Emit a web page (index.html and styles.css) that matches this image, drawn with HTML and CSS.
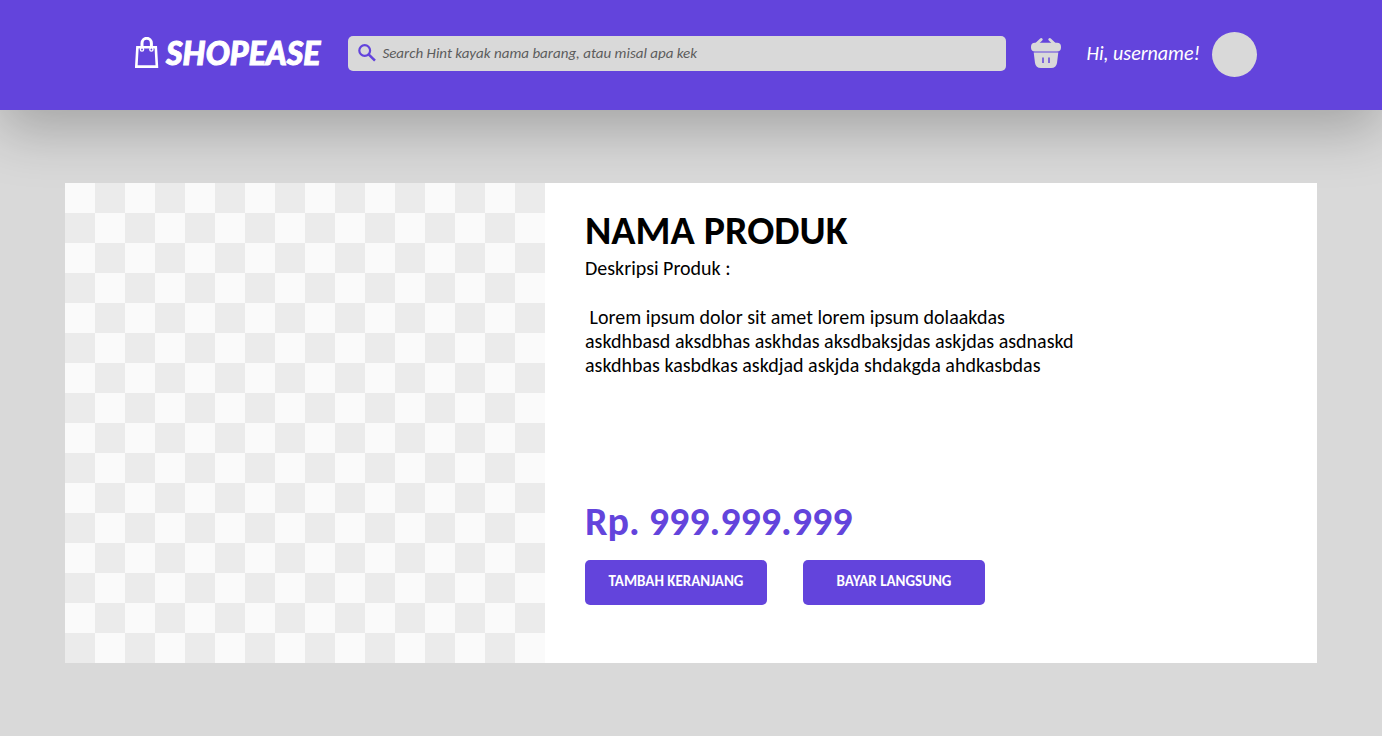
FILE: index.html
```html
<!DOCTYPE html>
<html lang="id">
<head>
<meta charset="utf-8">
<meta name="viewport" content="width=device-width, initial-scale=1">
<title>ShopEase</title>
<link rel="stylesheet" href="styles.css">
</head>
<body>
<header class="header">
  <a class="brand" href="#">
    <svg class="brand-icon" viewBox="0 0 24 32" width="24" height="32" fill="none" stroke="#fff" aria-hidden="true">
      <path d="M2.4 10.2H20.8L21.9 29.6H1.3Z" stroke-width="2.6"/>
      <path d="M7 12.5V6.2a4.7 4.900 0 0 1 9.400 0V12.500" stroke-width="3"/>
      <circle cx="7" cy="12.5" r="1.6" fill="#6344dc" stroke-width="1.4"/>
      <circle cx="16.4" cy="12.5" r="1.6" fill="#6344dc" stroke-width="1.4"/>
    </svg>
    <span class="brand-name">SHOPEASE</span>
  </a>
  <form class="search" role="search">
    <svg viewBox="0 0 18 18" width="18" height="18" fill="none" stroke="#6344dc" stroke-width="2.2" aria-hidden="true">
      <circle cx="6.7" cy="6.5" r="5.4"/>
      <path d="M10.6 10.4L17 16.6" stroke-width="2.6"/>
    </svg>
    <input class="search-input" type="search" aria-label="Cari barang" placeholder="Search Hint kayak nama barang, atau misal apa kek">
  </form>
  <a class="cart" href="#" aria-label="Keranjang">
    <svg viewBox="0 0 32 32" width="32" height="32" fill="#d9d9d9" aria-hidden="true">
      <path d="M6.500 7L11.200 2.500M24.500 7L19.800 2.500" stroke="#d9d9d9" stroke-width="3" stroke-linecap="round"/>
      <path d="M5 5.8h22a4 4 0 0 1 4 4v.7a4 4 0 0 1-4 4H5a4 4 0 0 1-4-4V9.800a4 4 0 0 1 4-4Z"/>
      <path d="M3.700 15.600H28.300L27 26a6 6 0 0 1-6 5H11a6 6 0 0 1-6-5Z"/>
      <path d="M13 20.500v5.500M19 20.500v5.500" stroke="#6344dc" stroke-width="1.500"/>
    </svg>
  </a>
  <a class="account" href="#">
    <span class="greeting">Hi, username!</span>
    <span class="avatar"></span>
  </a>
</header>
<main class="page">
  <article class="product">
    <div class="product-image" role="img" aria-label="Gambar produk"></div>
    <div class="product-info">
      <h1 class="title">NAMA PRODUK</h1>
      <p class="label">Deskripsi Produk :</p>
      <p class="description">&nbsp;Lorem ipsum dolor sit amet lorem ipsum dolaakdas<br>askdhbasd aksdbhas askhdas aksdbaksjdas askjdas asdnaskd<br>askdhbas kasbdkas askdjad askjda shdakgda ahdkasbdas</p>
      <p class="price">Rp. 999.999.999</p>
      <div class="actions">
        <button class="button" type="button">TAMBAH KERANJANG</button>
        <button class="button" type="button">BAYAR LANGSUNG</button>
      </div>
    </div>
  </article>
</main>
</body>
</html>
```
FILE: styles.css
```css
* {
  box-sizing: border-box;
}

body {
  margin: 0;
  background: #d9d9d9;
  color: #000;
  font-family: Carlito, Lato, sans-serif;
  font-size: 20px;
  line-height: 24px;
}

h1,
p {
  margin: 0;
}

a {
  color: inherit;
  text-decoration: none;
}

svg {
  display: block;
  flex: none;
}

.header {
  display: flex;
  align-items: center;
  padding: 32px 125px 33px 135px;
  background: #6344dc;
  color: #fff;
  box-shadow: 0 19px 56px rgba(0, 0, 0, 0.25);
}

.brand {
  display: flex;
  align-items: center;
  gap: 7px;
  margin-right: 28px;
  padding-bottom: 4px;
}

.brand-name {
  font-family: Lato, sans-serif;
  font-size: 32px;
  font-style: italic;
  font-weight: 900;
  line-height: 32px;
  -webkit-text-stroke: 1px #fff;
}

.search {
  display: flex;
  flex: 1;
  align-items: center;
  gap: 6px;
  height: 35px;
  margin-bottom: 2px;
  padding: 0 10px 2px;
  border-radius: 5px;
  background: #d9d9d9;
}

.search-input {
  flex: 1;
  min-width: 0;
  padding: 0;
  border: 0;
  outline: 0;
  background: none;
  font-family: inherit;
  font-size: 15px;
  font-style: italic;
}

.search-input::placeholder {
  color: #5c5c5c;
  opacity: 1;
}

.cart {
  margin: 0 25px 4px 24px;
}

.account {
  display: flex;
  align-items: center;
  gap: 12px;
  font-style: italic;
}

.greeting {
  padding-bottom: 4px;
}

.avatar {
  width: 45px;
  height: 45px;
  border-radius: 50%;
  background: #d9d9d9;
}

.page {
  padding: 73px 65px;
}

.product {
  display: flex;
  background: #fff;
}

.product-image {
  flex: none;
  width: 480px;
  aspect-ratio: 1;
  background: repeating-conic-gradient(#ebebeb 0 25%, #fafafa 0 50%) 0 0 / 60px 60px;
}

.product-info {
  display: flex;
  flex: 1;
  flex-direction: column;
  padding: 23px 40px 58px;
}

.title,
.price {
  font-size: 40px;
  font-weight: 700;
  line-height: 50px;
}

.description {
  margin-top: 25px;
}

.price {
  margin-top: auto;
  color: #6344dc;
}

.actions {
  display: flex;
  gap: 36px;
  margin-top: 13px;
}

.button {
  width: 182px;
  height: 45px;
  padding: 0 0 3px;
  border: 0;
  border-radius: 5px;
  background: #6344dc;
  color: #fff;
  font-family: inherit;
  font-size: 15px;
  font-weight: 700;
}
```
